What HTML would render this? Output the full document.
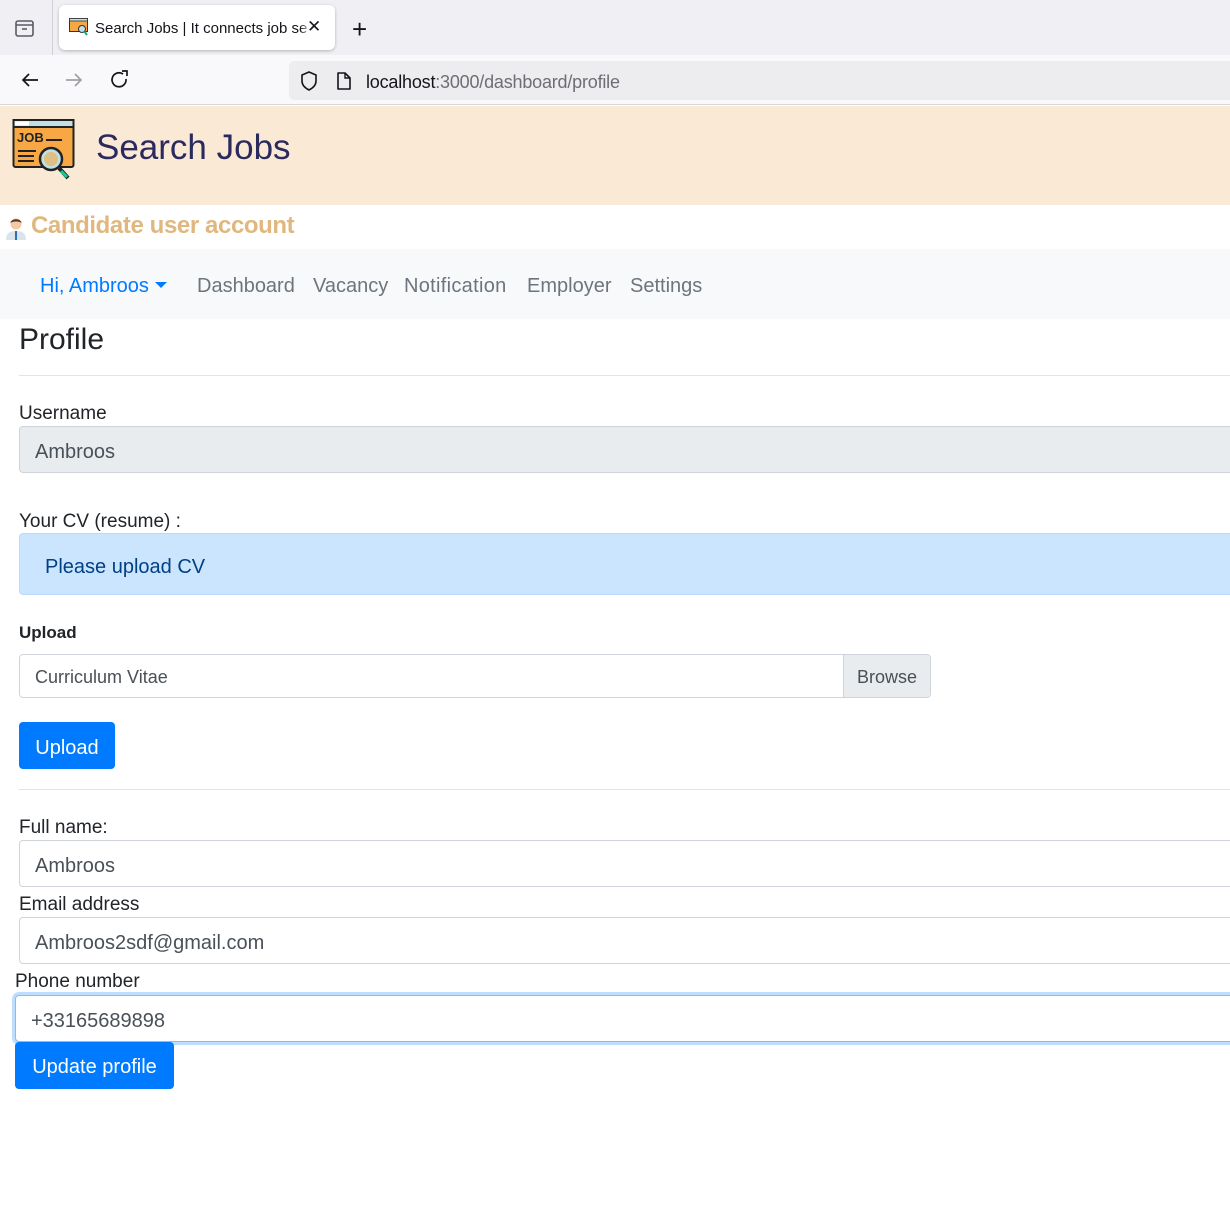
<!DOCTYPE html>
<html><head><meta charset="utf-8"><style>
*{box-sizing:border-box;margin:0;padding:0}
body{width:1230px;height:1206px;overflow:hidden;background:#fff;font-family:"Liberation Sans",Arial,sans-serif;position:relative;color:#212529}
.a{position:absolute;white-space:nowrap}
.inp{position:absolute;left:19px;width:1240px;height:47px;border:1px solid #ced4da;border-radius:4px;background:#fff;font-size:20px;color:#495057;padding:3px 15px 0;line-height:45px}
.lbl{position:absolute;left:19px;font-size:19px;color:#212529}
.btn{position:absolute;background:#007bff;color:#fff;border-radius:4px;font-size:20px;text-align:center;padding-top:3px}
</style></head><body>
<!-- tab bar -->
<div class="a" style="left:0;top:0;width:1230px;height:55px;background:#f0f0f4"></div>
<div class="a" style="left:52px;top:0;width:1px;height:55px;background:#d0d0d7"></div>
<svg class="a" style="left:14px;top:18px" width="22" height="20" viewBox="0 0 22 20"><rect x="2" y="3" width="17" height="15" rx="2" fill="none" stroke="#5b5b66" stroke-width="1.6"/><line x1="2" y1="7" x2="19" y2="7" stroke="#5b5b66" stroke-width="1.6"/><line x1="8" y1="11" x2="13" y2="11" stroke="#5b5b66" stroke-width="1.6"/></svg>
<div class="a" style="left:59px;top:5px;width:276px;height:45px;background:#fff;border-radius:6px;box-shadow:0 1px 3px rgba(0,0,0,.25)"></div>
<svg class="a" style="left:69px;top:18px" width="20" height="18" viewBox="0 0 20 18"><rect x="0.5" y="0.5" width="18" height="13" fill="#f7a845" stroke="#333" stroke-width="1"/><rect x="0.5" y="0.5" width="18" height="2.5" fill="#bfe0e4" stroke="#333" stroke-width=".8"/><circle cx="13" cy="11" r="3.5" fill="#bfe0e4" stroke="#333"/><line x1="15.5" y1="13.5" x2="18" y2="17" stroke="#1a8" stroke-width="2"/></svg>
<div class="a" style="left:95px;top:20px;font-size:15px;color:#15141a;width:212px;overflow:hidden">Search Jobs | It connects job seekers</div>
<div class="a" style="left:300px;top:14px;width:12px;height:26px;background:linear-gradient(90deg,rgba(255,255,255,0),#fff)"></div>
<div class="a" style="left:307px;top:17px;font-size:17px;color:#15141a">✕</div>
<div class="a" style="left:352px;top:14px;font-size:26px;color:#15141a;font-weight:300">+</div>
<!-- toolbar -->
<div class="a" style="left:0;top:55px;width:1230px;height:50px;background:#f9f9fb;border-bottom:1px solid #d7d7db"></div>
<svg class="a" style="left:20px;top:70px" width="20" height="20" viewBox="0 0 20 20"><path d="M18 10H3M9 4L3 10l6 6" fill="none" stroke="#15141a" stroke-width="1.7"/></svg>
<svg class="a" style="left:64px;top:70px" width="20" height="20" viewBox="0 0 20 20"><path d="M2 10h15M11 4l6 6-6 6" fill="none" stroke="#a0a0a8" stroke-width="1.7"/></svg>
<svg class="a" style="left:110px;top:70px" width="20" height="20" viewBox="0 0 20 20"><path d="M16 9A7 7 0 1 1 13 4" fill="none" stroke="#15141a" stroke-width="1.7"/><path d="M12 1h5v5" fill="none" stroke="#15141a" stroke-width="1.7"/></svg>
<div class="a" style="left:289px;top:61px;width:950px;height:39px;background:#ededf0;border-radius:5px"></div>
<svg class="a" style="left:299px;top:70px" width="20" height="22" viewBox="0 0 20 22"><path d="M10 2L3 5v6c0 4 3 7 7 9 4-2 7-5 7-9V5z" fill="none" stroke="#15141a" stroke-width="1.6"/></svg>
<svg class="a" style="left:335px;top:71px" width="18" height="20" viewBox="0 0 18 20"><path d="M3 2h7l5 5v11H3z" fill="none" stroke="#15141a" stroke-width="1.6" stroke-linejoin="round"/><path d="M10 2v5h5" fill="none" stroke="#15141a" stroke-width="1.4"/></svg>
<div class="a" style="left:366px;top:72px;font-size:18px;color:#15141a;letter-spacing:-.2px">localhost<span style="color:#6d6d75">:3000/dashboard/profile</span></div>
<!-- header -->
<div class="a" style="left:0;top:106px;width:1230px;height:99px;background:#fae9d4"></div>
<svg class="a" style="left:12px;top:118px" width="66" height="66" viewBox="0 0 66 66"><rect x="1.5" y="2" width="60" height="47" rx="2" fill="#f7a845" stroke="#222" stroke-width="2"/><rect x="1.5" y="2" width="60" height="7" fill="#bfe0e4" stroke="#222" stroke-width="2"/><rect x="3" y="3.5" width="14" height="4" fill="#fff"/><text x="5" y="24" font-family="Liberation Sans,sans-serif" font-size="13" font-weight="bold" fill="#222">JOB</text><line x1="34" y1="22" x2="50" y2="22" stroke="#222" stroke-width="2"/><line x1="6" y1="33" x2="24" y2="33" stroke="#222" stroke-width="2"/><line x1="6" y1="38" x2="22" y2="38" stroke="#222" stroke-width="2"/><line x1="6" y1="43" x2="22" y2="43" stroke="#222" stroke-width="2"/><circle cx="39" cy="41" r="11" fill="#bfe0e4" stroke="#222" stroke-width="2.5"/><circle cx="39" cy="41" r="7" fill="#f7a845" opacity=".6"/><line x1="47" y1="50" x2="56" y2="60" stroke="#222" stroke-width="4"/><line x1="49" y1="53" x2="55" y2="59" stroke="#1c9" stroke-width="3"/></svg>
<div class="a" style="left:96px;top:128px;font-size:35px;color:#2a2a5e">Search Jobs</div>
<!-- candidate -->
<svg class="a" style="left:5px;top:215px" width="22" height="25" viewBox="0 0 22 25"><path d="M1 25c0-7 4-9 10-9s10 2 10 9z" fill="#d9e4ec"/><path d="M10 16h2l0 9h-2z" fill="#2d6fb7"/><circle cx="11" cy="9" r="5.5" fill="#f3c9a5"/><path d="M5.5 8c0-5 11-5 11 0-2-2-9-2-11 0z" fill="#5a3a22"/></svg>
<div class="a" style="left:31px;top:212px;font-size:24px;color:#e0b87f;font-weight:bold;letter-spacing:-.4px">Candidate user account</div>
<!-- nav -->
<div class="a" style="left:0;top:249px;width:1230px;height:70px;background:#f8f9fa"></div>
<div class="a" style="left:40px;top:275px;font-size:20px;color:#007bff">Hi, Ambroos</div>
<div class="a" style="left:155px;top:282px;width:0;height:0;border-left:6px solid transparent;border-right:6px solid transparent;border-top:6px solid #007bff"></div>
<div class="a" style="left:197px;top:275px;font-size:20px;color:#6c757d">Dashboard</div>
<div class="a" style="left:313px;top:275px;font-size:20px;color:#6c757d">Vacancy</div>
<div class="a" style="left:404px;top:275px;font-size:20px;color:#6c757d;letter-spacing:.3px">Notification</div>
<div class="a" style="left:527px;top:275px;font-size:20px;color:#6c757d">Employer</div>
<div class="a" style="left:630px;top:275px;font-size:20px;color:#6c757d">Settings</div>
<!-- content -->
<div class="a" style="left:19px;top:323px;font-size:30px;color:#212529">Profile</div>
<div class="a" style="left:19px;top:375px;width:1211px;height:1px;background:#e3e3e3"></div>
<div class="lbl" style="top:403px">Username</div>
<div class="inp" style="top:426px;background:#e9ecef">Ambroos</div>
<div class="lbl" style="top:511px">Your CV (resume) :</div>
<div class="a" style="left:19px;top:533px;width:1240px;height:62px;background:#cce5ff;border:1px solid #b8daff;border-radius:4px;color:#004085;font-size:20px;padding:3px 0 0 25px;line-height:60px">Please upload CV</div>
<div class="a" style="left:19px;top:623px;font-size:17px;font-weight:bold;color:#212529">Upload</div>
<div class="a" style="left:19px;top:654px;width:912px;height:44px;border:1px solid #ced4da;border-radius:4px;background:#fff"></div>
<div class="a" style="left:35px;top:667px;font-size:18px;color:#495057">Curriculum Vitae</div>
<div class="a" style="left:843px;top:655px;width:87px;height:42px;background:#e9ecef;border-left:1px solid #ced4da;border-radius:0 4px 4px 0;font-size:18px;color:#495057;text-align:center;line-height:44px">Browse</div>
<div class="btn" style="left:19px;top:722px;width:96px;height:47px;line-height:47px">Upload</div>
<div class="a" style="left:19px;top:789px;width:1211px;height:1px;background:#e3e3e3"></div>
<div class="lbl" style="top:817px">Full name:</div>
<div class="inp" style="top:840px">Ambroos</div>
<div class="lbl" style="top:894px">Email address</div>
<div class="inp" style="top:917px">Ambroos2sdf@gmail.com</div>
<div class="lbl" style="top:971px;left:15px">Phone number</div>
<div class="inp" style="top:995px;left:15px;border-color:#80bdff;box-shadow:0 0 0 3px rgba(0,123,255,.25)">+33165689898</div>
<div class="btn" style="left:15px;top:1042px;width:159px;height:47px;line-height:44px">Update profile</div>
</body></html>
